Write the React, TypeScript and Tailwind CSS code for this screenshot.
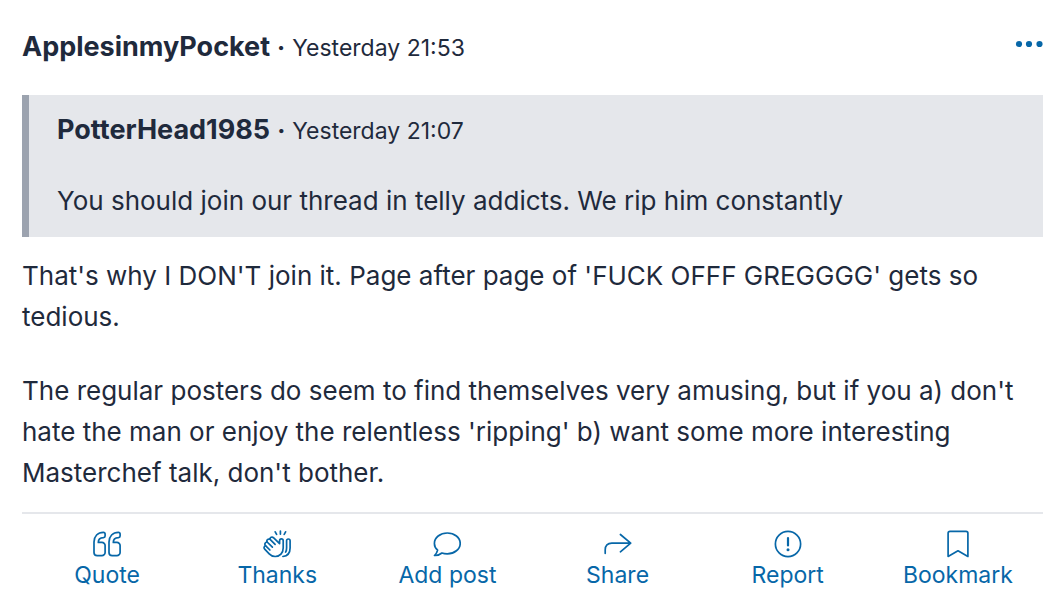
import React from "react";

const iconProps = {
  viewBox: "0 0 28 28",
  fill: "none",
  stroke: "currentColor",
  strokeWidth: 1.7,
  strokeLinecap: "round" as const,
  strokeLinejoin: "round" as const,
  "aria-hidden": true,
  className: "h-7 w-7",
};

function QuoteIcon() {
  return (
    <svg {...iconProps}>
      <path d="M10.4 2.3C4.8 2.3 1 6.2 1 12v10.4a3.2 3.2 0 0 0 3.2 3.2h4.7a3.2 3.2 0 0 0 3.2-3.2v-6.8a3.2 3.2 0 0 0-3.2-3.2H5.3c0-3 1.9-4.6 5.1-4.8 1.1-.1 1.7-.7 1.7-1.7V4c0-1-.6-1.7-1.7-1.7Z" />
      <path d="M25.4 2.3c-5.6 0-9.4 3.9-9.4 9.7v10.4a3.2 3.2 0 0 0 3.2 3.2h4.7a3.2 3.2 0 0 0 3.2-3.2v-6.8a3.2 3.2 0 0 0-3.2-3.2h-3.6c0-3 1.9-4.6 5.1-4.8 1.1-.1 1.7-.7 1.7-1.7V4c0-1-.6-1.7-1.7-1.7Z" />
    </svg>
  );
}

function ThanksIcon() {
  return (
    <svg {...iconProps}>
      <path d="m12.2 1.8 1.4 2.6M17.4 1v3.1M22.6 1.8l-1.4 2.6" />
      <path d="M16.6 13.6 10.7 7.8C9 6.2 6.7 7.4 7.1 9.3 5 8.4 3.2 10.2 4.1 12c-2 .2-2.9 2.2-1.6 3.7-1.5.5-1.9 2.2-.8 3.4l4.5 4.7c1.7 1.8 3.6 2.7 6 2.7 4.6 0 8-3.6 8-8.6v-7.2c0-2.4-3.6-2.4-3.6 0Z" />
      <path d="m7.1 9.3 5 5M4.1 12l5.3 5.2M2.5 15.7l4.4 4.3" />
      <path d="M23.6 14.4v-3.7c0-2.3 3.5-2.3 3.5 0v7.2c0 4.8-2.9 8-7.2 8.6M23.6 14.4v3.5c0 1.6-.3 3-1 4.2" />
    </svg>
  );
}

function AddPostIcon() {
  return (
    <svg {...iconProps}>
      <path d="M14.3 3C7.2 3 1.4 7.6 1.4 13.4c0 2.6 1.2 5 3.2 6.8-.4 2.1-1.5 3.8-3.1 5.3 3 .2 5.3-.8 7.4-2.5 1.7.6 3.5.8 5.4.8 7.1 0 12.9-4.6 12.9-10.4S21.4 3 14.3 3Z" />
    </svg>
  );
}

function ShareIcon() {
  return (
    <svg {...iconProps}>
      <path d="M1.2 23.3v-3.5c0-4.2 2.4-6.7 6.6-6.7h18.7M16.4 4.5l10.3 8.6-10.3 8.7" />
    </svg>
  );
}

function ReportIcon() {
  return (
    <svg {...iconProps}>
      <circle cx="14" cy="14" r="12.6" />
      <path strokeWidth="2.2" d="M14 8v7.4" />
      <circle cx="14" cy="19.8" r="1.5" fill="currentColor" stroke="none" />
    </svg>
  );
}

function BookmarkIcon() {
  return (
    <svg {...iconProps}>
      <path d="M6 1.3h16c1.2 0 1.9.7 1.9 1.9v23.2L14 20.8l-9.9 5.6V3.2c0-1.2.7-1.9 1.9-1.9Z" />
    </svg>
  );
}

const actions = [
  { label: "Quote", Icon: QuoteIcon },
  { label: "Thanks", Icon: ThanksIcon },
  { label: "Add post", Icon: AddPostIcon },
  { label: "Share", Icon: ShareIcon },
  { label: "Report", Icon: ReportIcon },
  { label: "Bookmark", Icon: BookmarkIcon },
];

function PostMeta({ author, time }: { author: string; time: string }) {
  return (
    <div className="flex items-baseline gap-[7px] leading-[41px]">
      <span className="text-[27px] font-bold">{author}</span>
      <span className="text-[23px] font-extrabold">·</span>
      <span className="text-[23px]">{time}</span>
    </div>
  );
}

function App() {
  return (
    <div className="bg-white pt-[26px] pr-1 pl-[22px] font-['Inter',sans-serif] text-[#1f2a3c]">
      <article>
        <header className="mb-[26px] flex items-start justify-between">
          <PostMeta author="ApplesinmyPocket" time="Yesterday 21:53" />
          <button type="button" aria-label="More options" className="py-[9px] text-[#0767a8]">
            <svg viewBox="0 0 28 18" fill="currentColor" aria-hidden="true" className="h-[18px] w-7">
              <circle cx="4" cy="9" r="3.1" />
              <circle cx="14" cy="9" r="3.1" />
              <circle cx="24.5" cy="9" r="3.1" />
            </svg>
          </button>
        </header>

        <blockquote className="border-l-[7px] border-[#9ca3af] bg-[#e5e7eb] pt-[14px] pb-4 pl-7">
          <PostMeta author="PotterHead1985" time="Yesterday 21:07" />
          <p className="mt-7 text-[26px] leading-[41px]">
            You should join our thread in telly addicts. We rip him constantly
          </p>
        </blockquote>

        <div className="mt-[18px] text-[26px] leading-[41px]">
          <p>
            That's why I DON'T join it. Page after page of 'FUCK OFFF GREGGGG' gets so tedious.
          </p>
          <p className="mt-[33px]">
            The regular posters do seem to find themselves very amusing, but if you a) don't hate
            the man or enjoy the relentless 'ripping' b) want some more interesting Masterchef
            talk, don't bother.
          </p>
        </div>

        <footer className="mt-[19px] grid grid-cols-6 border-t-2 border-[#e5e7eb] pt-4">
          {actions.map(({ label, Icon }) => (
            <button
              key={label}
              type="button"
              className="flex flex-col items-center text-[23px] leading-[34px] text-[#0767a8]"
            >
              <Icon />
              {label}
            </button>
          ))}
        </footer>
      </article>
    </div>
  );
}

export default App;
